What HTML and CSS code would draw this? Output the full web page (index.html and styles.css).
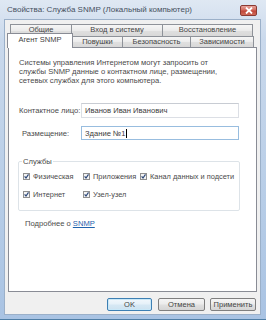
FILE: index.html
```html
<!DOCTYPE html>
<html>
<head>
<meta charset="utf-8">
<link rel="stylesheet" href="styles.css">
</head>
<body>
<div class="window">
  <div class="titlebar">
    <span class="title">Свойства: Служба SNMP (Локальный компьютер)</span>
    <div class="close">
      <svg width="8" height="7" viewBox="0 0 8 7"><path d="M1 0.5 L7 6.5 M7 0.5 L1 6.5" stroke="#fff" stroke-width="1.8"/></svg>
    </div>
  </div>
  <div class="client">
    <div class="tabs">
      <div class="row row1">
        <div class="tab w62">Общие</div>
        <div class="tab w91">Вход в систему</div>
        <div class="tab w90">Восстановление</div>
      </div>
      <div class="row row2">
        <div class="tab selected">Агент SNMP</div>
        <div class="tab w50">Повушки</div>
        <div class="tab w68">Безопасность</div>
        <div class="tab w63">Зависимости</div>
      </div>
    </div>
    <div class="panel">
      <p class="desc">Системы управления Интернетом могут запросить от службы SNMP данные о контактном лице, размещении, сетевых службах для этого компьютера.</p>
      <div class="field first">
        <span class="label">Контактное лицо:</span>
        <div class="input">Иванов Иван Иванович</div>
      </div>
      <div class="field second">
        <span class="label indent">Размещение:</span>
        <div class="input focus">Здание №1<span class="caret"></span></div>
      </div>
      <fieldset class="group">
        <legend>Службы</legend>
        <div class="checks">
          <label class="check"><svg class="box" width="7" height="7" viewBox="0 0 7 7"><rect x="0.5" y="0.5" width="6" height="6" fill="#f4f4f4" stroke="#8f8f8f"/><path d="M1.6 3.4 L3 5 L5.5 1.4" fill="none" stroke="#2f4a7a" stroke-width="1.2"/></svg>Физическая</label>
          <label class="check"><svg class="box" width="7" height="7" viewBox="0 0 7 7"><rect x="0.5" y="0.5" width="6" height="6" fill="#f4f4f4" stroke="#8f8f8f"/><path d="M1.6 3.4 L3 5 L5.5 1.4" fill="none" stroke="#2f4a7a" stroke-width="1.2"/></svg>Приложения</label>
          <label class="check"><svg class="box" width="7" height="7" viewBox="0 0 7 7"><rect x="0.5" y="0.5" width="6" height="6" fill="#f4f4f4" stroke="#8f8f8f"/><path d="M1.6 3.4 L3 5 L5.5 1.4" fill="none" stroke="#2f4a7a" stroke-width="1.2"/></svg>Канал данных и подсети</label>
          <label class="check"><svg class="box" width="7" height="7" viewBox="0 0 7 7"><rect x="0.5" y="0.5" width="6" height="6" fill="#f4f4f4" stroke="#8f8f8f"/><path d="M1.6 3.4 L3 5 L5.5 1.4" fill="none" stroke="#2f4a7a" stroke-width="1.2"/></svg>Интернет</label>
          <label class="check"><svg class="box" width="7" height="7" viewBox="0 0 7 7"><rect x="0.5" y="0.5" width="6" height="6" fill="#f4f4f4" stroke="#8f8f8f"/><path d="M1.6 3.4 L3 5 L5.5 1.4" fill="none" stroke="#2f4a7a" stroke-width="1.2"/></svg>Узел-узел</label>
        </div>
      </fieldset>
      <p class="more">Подробнее о <a class="link">SNMP</a></p>
    </div>
    <div class="buttons">
      <div class="btn default w45">OK</div>
      <div class="btn w47">Отмена</div>
      <div class="btn w46">Применить</div>
    </div>
  </div>
</div>
</body>
</html>
```
FILE: styles.css
```css
html, body {
  margin: 0;
  padding: 0;
}
body {
  width: 266px;
  height: 320px;
  overflow: hidden;
  font-family: "Liberation Sans", Arial, sans-serif;
  font-size: 8px;
  color: #4a4a4a;
}
.window {
  width: 266px;
  height: 320px;
  box-sizing: border-box;
  padding: 0 5px 4px 4px;
  display: flex;
  flex-direction: column;
  background: linear-gradient(#dfe8f3, #cad9ec 40px, #b7cde7 200px, #a9c3e3);
  border-bottom: 1px solid #4f7ea6;
}
.titlebar {
  height: 19px;
  display: flex;
  align-items: flex-start;
}
.title {
  margin: 5px 0 0 3px;
  font-size: 8px;
  line-height: 9px;
  color: #46505e;
  white-space: nowrap;
}
.close {
  margin: 5px 4px 0 auto;
  width: 17px;
  height: 11px;
  box-sizing: border-box;
  border: 1px solid #8a3a33;
  border-radius: 2px;
  background: linear-gradient(#e7a49c, #d26a5e 45%, #c0463a 55%, #cf6a58);
  display: flex;
  align-items: center;
  justify-content: center;
}
.client {
  flex: 1;
  background: #f0f0f0;
  border: 1px solid #9bb0c9;
  display: flex;
  flex-direction: column;
}
.tabs {
  padding-top: 4px;
}
.row {
  display: flex;
}
.row1 {
  height: 12px;
  margin-left: 5px;
}
.row2 {
  height: 11px;
  margin-left: 2px;
}
.tab {
  box-sizing: border-box;
  border: 1px solid #8e9299;
  border-bottom: none;
  background: linear-gradient(#f6f6f6, #ebebeb 50%, #dfdfdf 55%, #d8d8d8);
  font-size: 7.5px;
  line-height: 10px;
  text-align: center;
  color: #444;
  white-space: nowrap;
  margin-left: -1px;
}
.row .tab:first-child {
  margin-left: 0;
}
.w62 { width: 62px; }
.w91 { width: 92px; }
.w90 { width: 91px; }
.w50 { width: 51px; }
.w68 { width: 69px; }
.w63 { width: 64px; }
.tab.selected {
  width: 66px;
  height: 15px;
  margin-top: -3px;
  background: #fff;
  position: relative;
  z-index: 2;
  line-height: 11px;
  border-color: #898c95;
}
.panel {
  margin-left: 3px;
  width: 249px;
  height: 245px;
  box-sizing: border-box;
  border: 1px solid #898c95;
  background: #fff;
  padding: 10px 0 0 10px;
  display: flex;
  flex-direction: column;
  align-items: flex-start;
}
.desc {
  margin: 0;
  width: 200px;
  line-height: 9px;
  font-size: 7.6px;
}
.field {
  display: flex;
  align-items: center;
}
.field.first {
  margin-top: 18px;
}
.field.second {
  margin-top: 8px;
}
.label {
  width: 62px;
  font-size: 7.6px;
}
.label.indent {
  padding-left: 3px;
  width: 59px;
}
.input {
  width: 158px;
  height: 15px;
  box-sizing: border-box;
  border: 1px solid #dcdfe5;
  border-top-color: #c8ccd3;
  padding-left: 3px;
  font-size: 7.6px;
  line-height: 13px;
  color: #3a3a3a;
  display: flex;
  align-items: center;
}
.input.focus {
  height: 14px;
  border-color: #98bddf;
}
.caret {
  display: inline-block;
  width: 1px;
  height: 9px;
  background: #000;
  margin-left: 1px;
}
.group {
  margin: 17px 0 0 -1px;
  width: 222px;
  box-sizing: border-box;
  border: 1px solid #dde3e8;
  border-radius: 2px;
  padding: 6px 4px 11px 4px;
}
.group legend {
  padding: 0 1px;
  margin-left: -1px;
  font-size: 7.6px;
  line-height: 9px;
}
.checks {
  display: grid;
  grid-template-columns: 60px 57px auto;
  row-gap: 9px;
}
.check {
  display: flex;
  align-items: center;
  gap: 3px;
  font-size: 7.4px;
  line-height: 9px;
  white-space: nowrap;
}
.box {
  flex: none;
}
.more {
  margin: 8px 0 0 6px;
  font-size: 7.6px;
  line-height: 9px;
}
.link {
  color: #1f62ad;
  text-decoration: underline;
}
.buttons {
  display: flex;
  justify-content: flex-end;
  gap: 5px;
  padding-right: 4px;
  margin-top: 6px;
}
.btn {
  height: 13px;
  box-sizing: border-box;
  border: 1px solid #7f7f7f;
  border-radius: 2px;
  background: linear-gradient(#f5f5f5, #ececec 45%, #e0e0e0 55%, #d5d5d5);
  font-size: 7.5px;
  line-height: 11px;
  text-align: center;
  color: #444;
}
.btn.default {
  border-color: #3d7fb3;
  background: linear-gradient(#f2f8fc, #e6f1f9 45%, #d6e8f4 55%, #cde2f0);
  box-shadow: inset 0 0 0 1px #c9e8f8;
  margin-right: 1px;
}
.w45 { width: 45px; }
.w47 { width: 47px; }
.w46 { width: 46px; }
```
